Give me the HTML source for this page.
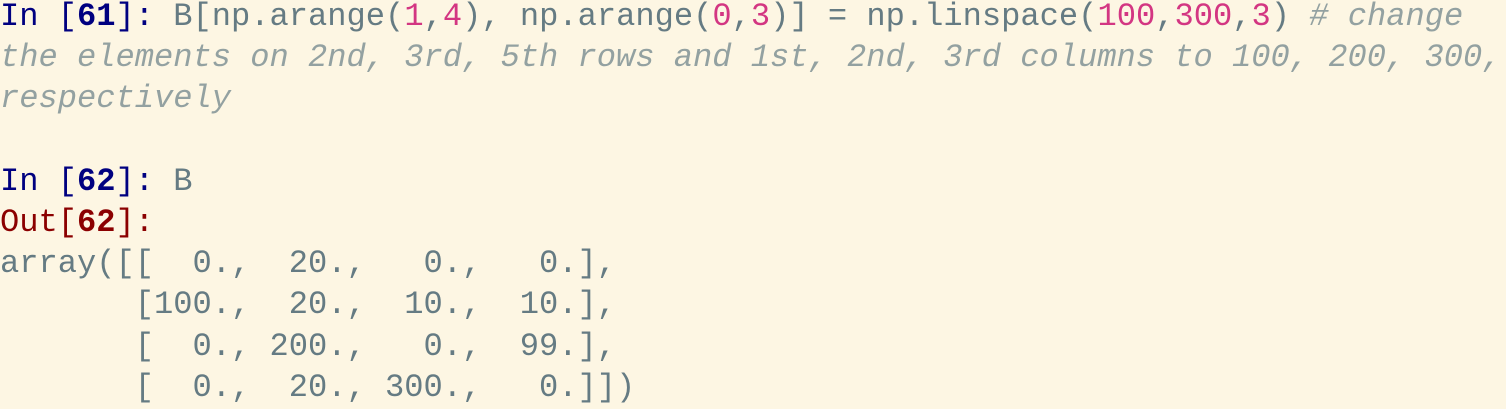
<!DOCTYPE html>
<html><head><meta charset="utf-8"><style>
html,body{margin:0;padding:0;background:#fdf6e3;width:1506px;height:409px;overflow:hidden}
pre{margin:0;position:absolute;left:0;top:-4px;font-family:"Liberation Mono",monospace;font-size:32.1px;line-height:41.2px;color:#657b83;white-space:pre}
.in{color:#000080}.out{color:#8b0000}b{font-weight:bold}
.n{color:#d33682}.c{color:#93a1a1;font-style:italic}
</style></head><body><pre><span class="in">In [<b>61</b>]: </span>B[np.arange(<span class="n">1</span>,<span class="n">4</span>), np.arange(<span class="n">0</span>,<span class="n">3</span>)] = np.linspace(<span class="n">100</span>,<span class="n">300</span>,<span class="n">3</span>) <span class="c"># change
the elements on 2nd, 3rd, 5th rows and 1st, 2nd, 3rd columns to 100, 200, 300,
respectively</span>

<span class="in">In [<b>62</b>]: </span>B
<span class="out">Out[<b>62</b>]:</span>
array([[  0.,  20.,   0.,   0.],
       [100.,  20.,  10.,  10.],
       [  0., 200.,   0.,  99.],
       [  0.,  20., 300.,   0.]])</pre></body></html>
